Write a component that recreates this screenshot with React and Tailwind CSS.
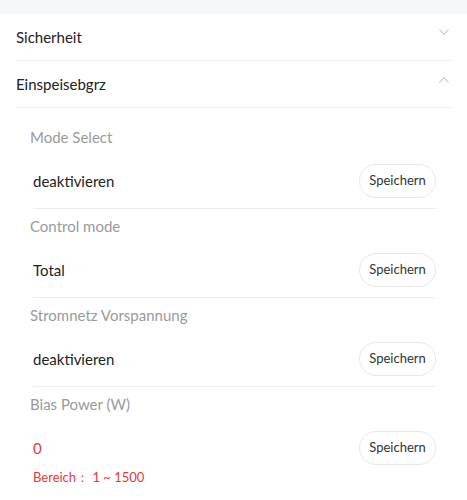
import { ChevronDown, ChevronUp } from 'lucide-react'

const fields = [
  { label: 'Mode Select', value: 'deaktivieren' },
  { label: 'Control mode', value: 'Total' },
  { label: 'Stromnetz Vorspannung', value: 'deaktivieren' },
]

function SaveButton() {
  return (
    <button className="h-[34px] w-[77px] rounded-full border border-[#e8e8e8] bg-white text-[13px] text-[#333]">
      Speichern
    </button>
  )
}

function Field({ label, value, red, hint, last }) {
  return (
    <div>
      <div className="h-[34px] flex items-center text-[15px] text-[#9a9a9a]">{label}</div>
      <div className="mt-[10px] h-[34px] flex items-center justify-between pl-[3px]">
        <span className={red ? 'text-[15px] text-[#e53935]' : 'text-[15px] text-[#222]'}>{value}</span>
        <SaveButton />
      </div>
      {hint && <div className="pl-[3px] mt-[3px] text-[13px] text-[#e53935]">{hint}</div>}
      {!last && <div className="mt-[10px] ml-[3px] h-px bg-[#ececec]" />}
    </div>
  )
}

export default function App() {
  return (
    <div className="w-[467px] h-[500px] bg-white overflow-hidden" style={{ fontFamily: 'Lato, "Open Sans", sans-serif' }}>
      <div className="h-[14px] bg-[#f6f7f9]" />
      <div className="px-4">
        <div className="h-[47px] flex items-center justify-between border-b border-[#efefef]">
          <span className="text-[15px] text-[#222]">Sicherheit</span>
          <ChevronDown size={18} strokeWidth={1} className="text-[#999] -mr-[2px] mb-[10px]" />
        </div>
        <div className="h-[47px] flex items-center justify-between border-b border-[#efefef]">
          <span className="text-[15px] text-[#222]">Einspeisebgrz</span>
          <ChevronUp size={18} strokeWidth={1} className="text-[#999] -mr-[2px] mb-[8px]" />
        </div>
      </div>
      <div className="ml-[30px] mr-[31px] pt-[12px]">
        {fields.map((f) => (
          <Field key={f.label} label={f.label} value={f.value} />
        ))}
        <Field label="Bias Power (W)" value="0" red hint="Bereich： 1 ~ 1500" last />
      </div>
    </div>
  )
}
